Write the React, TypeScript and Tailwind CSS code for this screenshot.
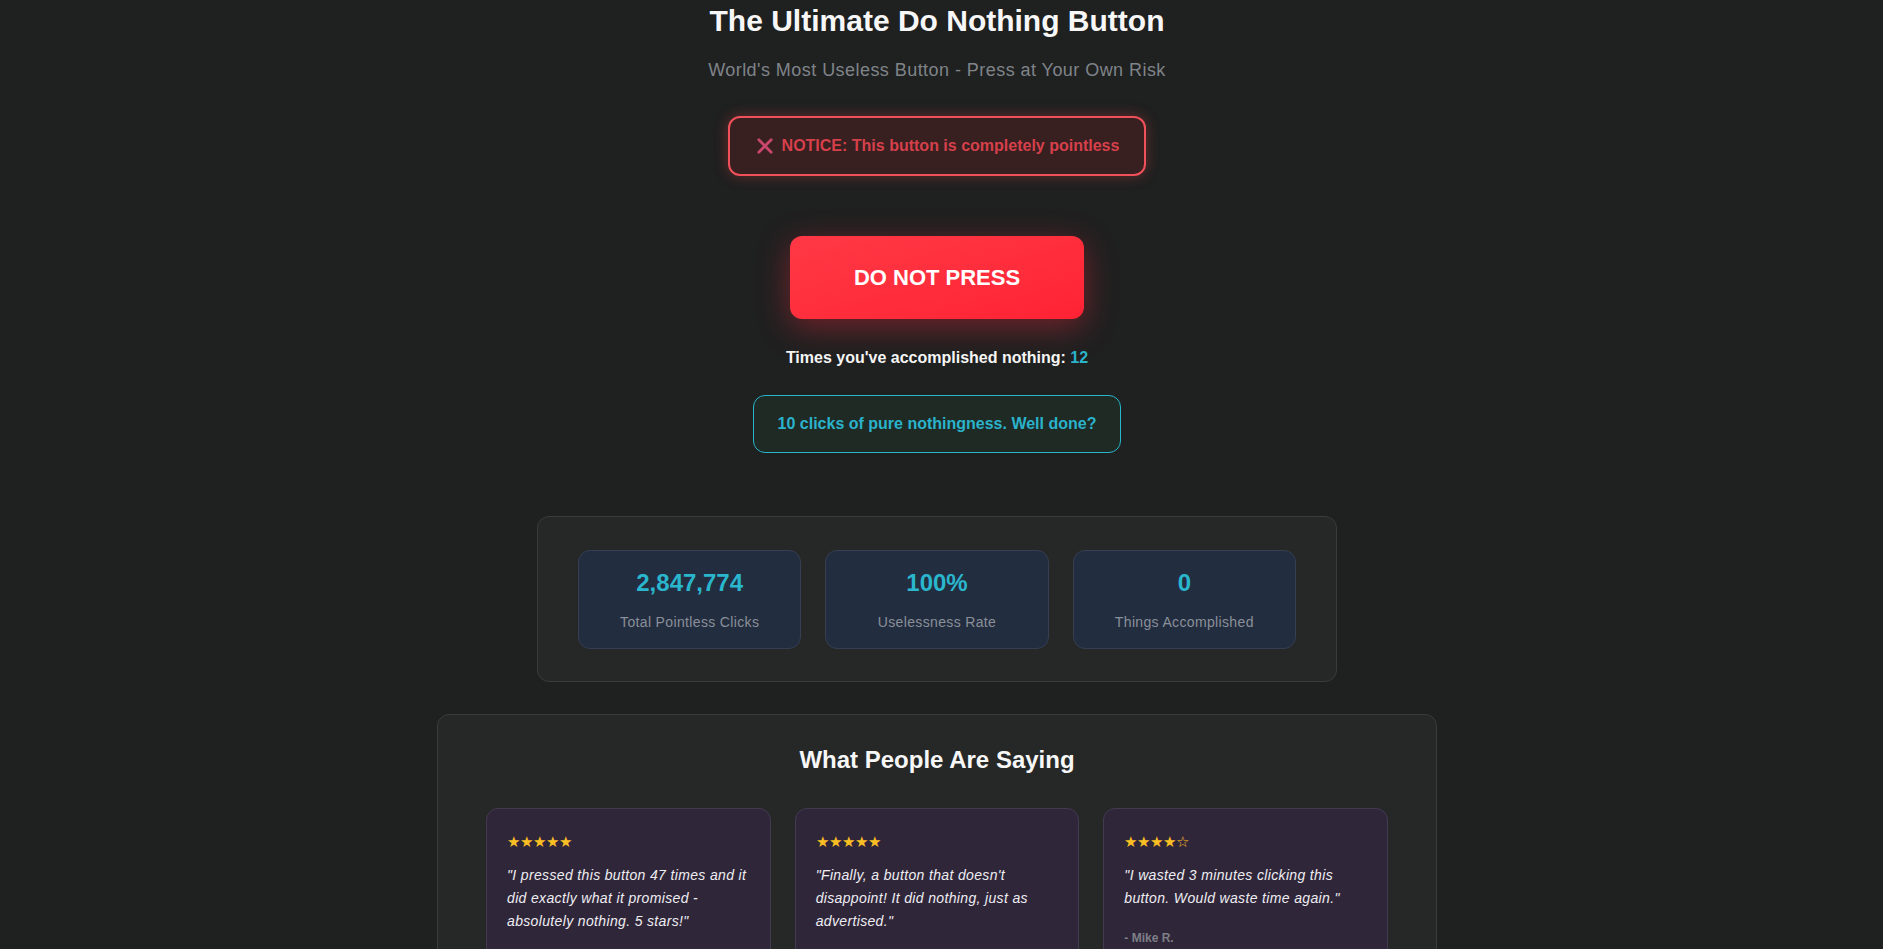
import React from 'react';

const stats = [
  { value: '2,847,774', label: 'Total Pointless Clicks' },
  { value: '100%', label: 'Uselessness Rate' },
  { value: '0', label: 'Things Accomplished' },
];

const reviews = [
  {
    stars: '★★★★★',
    text: '"I pressed this button 47 times and it did exactly what it promised - absolutely nothing. 5 stars!"',
    author: '',
  },
  {
    stars: '★★★★★',
    text: '"Finally, a button that doesn\'t disappoint! It did nothing, just as advertised."',
    author: '',
  },
  {
    stars: '★★★★☆',
    text: '"I wasted 3 minutes clicking this button. Would waste time again."',
    author: '- Mike R.',
  },
];

const App = () => {
  const [count, setCount] = React.useState(12);

  return (
    <div className="min-h-screen bg-[#1f2020] text-white font-['Liberation_Sans',Arial,sans-serif]">
      <div className="flex flex-col items-center pt-[3px] pr-[9px] pb-16">
        <h1 className="text-3xl font-bold text-[#f7f7f7] mb-[17px]">The Ultimate Do Nothing Button</h1>
        <p className="text-lg tracking-wide text-[#7f8489] mb-8">World's Most Useless Button - Press at Your Own Risk</p>

        {/* notice */}
        <div className="flex items-center gap-[9px] pl-[27px] pr-[25px] py-4 rounded-xl border-2 border-[#f0505a] bg-[#381f20] text-[#d6404b] shadow-[0_0_14px_rgba(239,68,68,0.35)]">
          <svg width="16" height="16" viewBox="0 0 16 16" className="shrink-0">
            <path d="M1.8 1.8 L14.2 14.2 M14.2 1.8 L1.8 14.2" stroke="#c9476c" strokeWidth="2.8" strokeLinecap="round" />
          </svg>
          <span className="text-base font-semibold">NOTICE: This button is completely pointless</span>
        </div>

        <button
          onClick={() => setCount(count + 1)}
          className="mt-[60px] w-[294px] h-[83px] rounded-xl bg-gradient-to-br from-[#ff3845] to-[#ff2234] text-white text-[22px] font-bold shadow-[0_8px_32px_rgba(255,40,60,0.38)]"
        >
          DO NOT PRESS
        </button>

        <p className="mt-[27px] text-base font-bold text-[#f5f5f5]">
          Times you've accomplished nothing: <span className="text-[#2ab3cb]">{count}</span>
        </p>

        <div className="mt-[25px] px-6 py-4 rounded-xl border border-[#27b6cc] bg-[#1f2a25] text-[#2ab3cb] text-base font-semibold">
          10 clicks of pure nothingness. Well done?
        </div>

        {/* stats */}
        <div className="mt-[63px] w-[800px] px-10 pt-[33px] pb-8 rounded-xl border border-[#3a3b3b] bg-[#262727]">
          <div className="grid grid-cols-3 gap-6">
            {stats.map((s, i) => (
              <div key={i} className="p-4 rounded-xl border border-[#363f51] bg-[#232d40] text-center">
                <div className="text-2xl font-bold text-[#2ab6cd]">{s.value}</div>
                <div className="mt-[13px] text-sm tracking-wide text-[#8a9099]">{s.label}</div>
              </div>
            ))}
          </div>
        </div>

        {/* testimonials */}
        <div className="mt-8 w-[1000px] px-12 pt-[29px] pb-12 rounded-xl border border-[#3a3b3b] bg-[#262727]">
          <h2 className="text-2xl font-bold text-center text-[#f7f7f7] mb-8">What People Are Saying</h2>
          <div className="grid grid-cols-3 gap-6">
            {reviews.map((r, i) => (
              <div key={i} className="p-5 rounded-xl border border-[#433a52] bg-[#30263a]">
                <div className="mt-[1px] mb-[10px] text-[15px] leading-6 text-[#fbbf24]">{r.stars}</div>
                <p className="text-sm italic leading-relaxed tracking-wide text-[#eeeef2]">{r.text}</p>
                {r.author && <p className="mt-5 text-xs font-bold text-[#7d7f86]">{r.author}</p>}
              </div>
            ))}
          </div>
        </div>
      </div>
    </div>
  );
};

export default App;
